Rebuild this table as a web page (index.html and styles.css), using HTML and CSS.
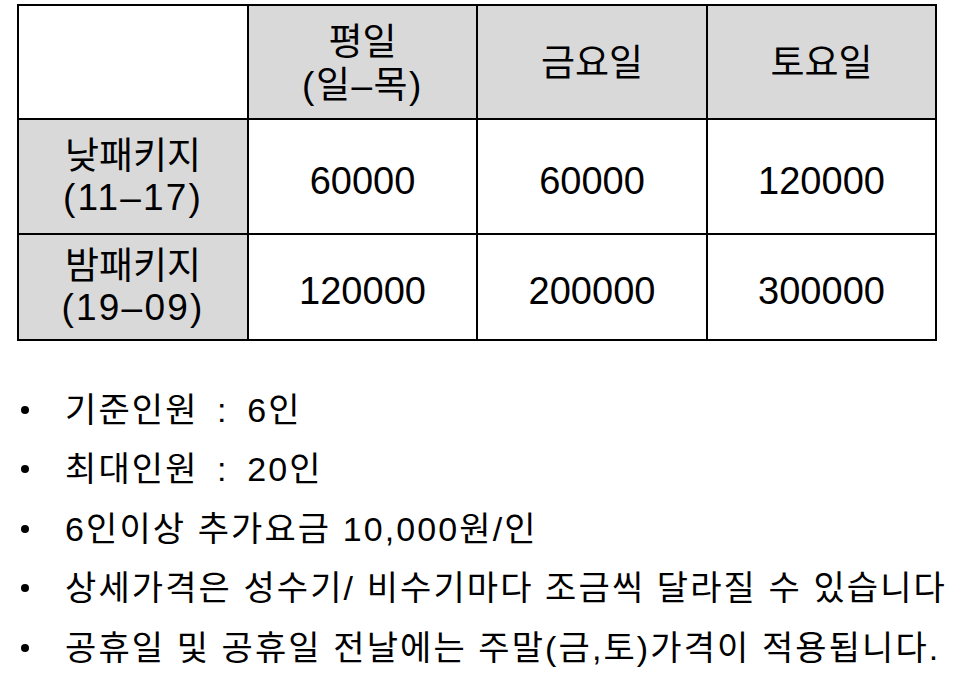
FILE: index.html
```html
<!DOCTYPE html>
<html lang="ko">
<head>
<meta charset="utf-8">
<title>가격표</title>
<link rel="stylesheet" href="styles.css">
</head>
<body>
<main class="page">
  <table class="price">
    <tr class="r-head">
      <td class="c1 blank"></td>
      <th class="c2 shade">평일<br><span class="sub">(일–목)</span></th>
      <th class="c3 shade">금요일</th>
      <th class="c4 shade">토요일</th>
    </tr>
    <tr class="r-day">
      <th class="c1 shade">낮패키지<br><span class="sub">(11–17)</span></th>
      <td class="c2 num">60000</td>
      <td class="c3 num">60000</td>
      <td class="c4 num">120000</td>
    </tr>
    <tr class="r-night">
      <th class="c1 shade">밤패키지<br><span class="sub">(19–09)</span></th>
      <td class="c2 num">120000</td>
      <td class="c3 num">200000</td>
      <td class="c4 num">300000</td>
    </tr>
  </table>

  <ul class="notes">
    <li class="wide"><span class="dot"></span><span class="txt">기준인원 : 6인</span></li>
    <li class="wide"><span class="dot"></span><span class="txt">최대인원 : 20인</span></li>
    <li><span class="dot"></span><span class="txt">6인이상 추가요금 10,000원/인</span></li>
    <li><span class="dot"></span><span class="txt">상세가격은 성수기/ 비수기마다 조금씩 달라질 수 있습니다</span></li>
    <li><span class="dot"></span><span class="txt">공휴일 및 공휴일 전날에는 주말(금,토)가격이 적용됩니다.</span></li>
  </ul>
</main>
</body>
</html>
```
FILE: styles.css
```css
html, body {
  margin: 0;
  padding: 0;
  background: #fff;
}

body {
  font-family: "Liberation Sans", "Noto Sans CJK KR", sans-serif;
  color: #000;
}

.page {
  padding: 4px 0 0 17px;
}

.price {
  border-collapse: separate;
  border-spacing: 0;
  table-layout: fixed;
  width: 920px;
  border-top: 2px solid #000;
  border-left: 2px solid #000;
}

.price td,
.price th {
  box-sizing: border-box;
  border-right: 2px solid #000;
  border-bottom: 2px solid #000;
  padding: 0;
  text-align: center;
  vertical-align: middle;
  font-weight: normal;
  font-size: 37px;
  line-height: 43px;
}

.c1 { width: 230px; }
.c2 { width: 229px; }
.c3 { width: 230px; }
.c4 { width: 229px; }

.r-head td, .r-head th { height: 114px; padding-top: 3px; }
.r-day td, .r-day th { height: 115px; line-height: 41px; }
.r-night td, .r-night th { height: 106px; line-height: 41px; }

.shade {
  background: #d9d9d9;
}

.blank {
  background: #fff;
}

.sub {
  letter-spacing: 1.5px;
}

.r-day .sub, .r-night .sub {
  letter-spacing: 2.2px;
}

.price .num {
  font-size: 38px;
  padding-top: 9px;
}

.notes {
  list-style: none;
  margin: 39px 0 0 -17px;
  padding: 0;
}

.notes li {
  display: flex;
  align-items: center;
  height: 59.5px;
  font-size: 34px;
  line-height: 40px;
  letter-spacing: 2.1px;
  white-space: nowrap;
}

.notes li.wide {
  word-spacing: 7px;
}

.dot {
  flex: none;
  width: 8px;
  height: 8px;
  border-radius: 50%;
  background: #000;
  margin-left: 21px;
  margin-right: 36px;
}
```
